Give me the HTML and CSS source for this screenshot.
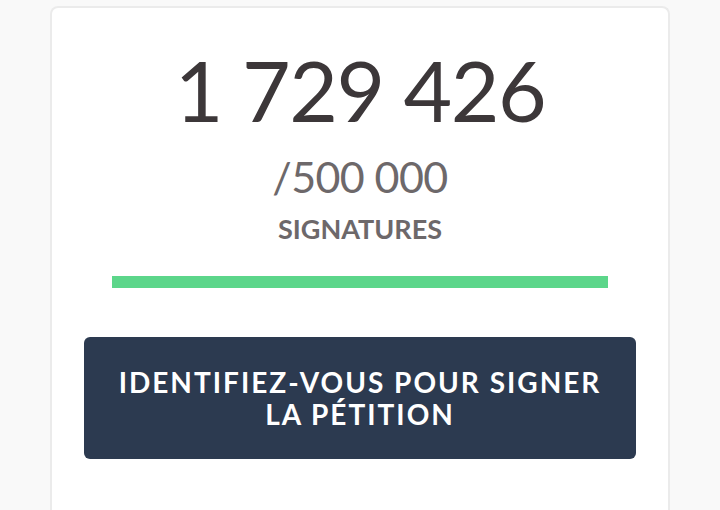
FILE: index.html
```html
<!DOCTYPE html>
<html lang="fr">
<head>
<meta charset="utf-8">
<link rel="stylesheet" href="styles.css">
</head>
<body>
<div class="card">
  <div class="count">1 729 426</div>
  <div class="goal">/500 000</div>
  <div class="label">SIGNATURES</div>
  <div class="bar"><div class="fill" style="width:100%"></div></div>
  <button class="cta">IDENTIFIEZ-VOUS POUR SIGNER<br>LA PÉTITION</button>
</div>
</body>
</html>
```
FILE: styles.css
```css
html, body {
  margin: 0;
  padding: 0;
  background: #f9f9f9;
  height: 100%;
  overflow: hidden;
}
body {
  font-family: Lato, "Open Sans", sans-serif;
}
.card {
  margin: 6px 0 0 50px;
  width: 616px;
  height: 470px;
  background: #fff;
  border: 2px solid #ebebeb;
  border-bottom: none;
  border-radius: 8px 8px 0 0;
  display: flex;
  flex-direction: column;
  align-items: center;
  padding-top: 32px;
  box-sizing: content-box;
}
.count {
  font-size: 84px;
  line-height: 100px;
  color: #3c3739;
  letter-spacing: -1.5px;
}
.goal {
  font-size: 43px;
  line-height: 56px;
  color: #6d686a;
  margin-top: 9px;
  letter-spacing: -0.6px;
}
.label {
  font-size: 27px;
  font-weight: 700;
  line-height: 36px;
  color: #6d686a;
  margin-top: 6px;
}
.bar {
  width: 496px;
  height: 12px;
  margin-top: 29px;
  background: #ececec;
}
.fill {
  height: 100%;
  background: #5cd68a;
}
.cta {
  margin-top: 49px;
  width: 552px;
  height: 122px;
  border: none;
  border-radius: 6px;
  background: #2c3a50;
  color: #fff;
  font-family: inherit;
  font-size: 28px;
  font-weight: 700;
  letter-spacing: 2px;
  line-height: 32px;
  padding: 0;
}
```
